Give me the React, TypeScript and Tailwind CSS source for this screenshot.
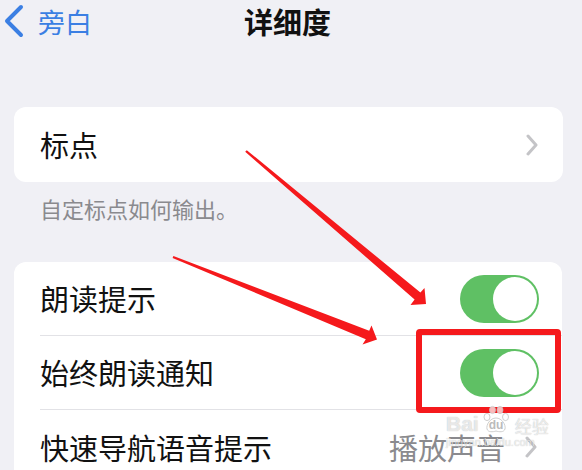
import { ReactNode } from 'react'

function Toggle() {
  return (
    <div className="relative h-[48px] w-[79px] rounded-full bg-[#5fc064]">
      <div className="absolute right-[2px] top-[2px] h-[44px] w-[44px] rounded-full bg-white" />
    </div>
  )
}

function Chevron() {
  return (
    <svg width="12" height="22" viewBox="0 0 12 22" fill="none">
      <path d="M2 2 L10 11 L2 20" stroke="#c4c4c7" strokeWidth="3" strokeLinecap="round" strokeLinejoin="round" />
    </svg>
  )
}

function Row({ label, children, last }: { label: string; children: ReactNode; last?: boolean }) {
  return (
    <div className="flex h-[74px] pl-[26px]">
      <div
        className={
          'flex flex-1 items-center justify-between pr-[23px] ' +
          (last ? '' : 'border-b border-[#e2e2e6]')
        }
      >
        <span className="text-[29px] leading-none">{label}</span>
        {children}
      </div>
    </div>
  )
}

export default function App() {
  return (
    <div className="relative h-[470px] w-[582px] overflow-hidden bg-[#f0f0f5] font-['Noto_Sans_CJK_SC',sans-serif] text-[#111]">
      {/* Nav bar */}
      <header className="grid h-[42px] grid-cols-[1fr_auto_1fr] items-center">
        <div className="flex items-center gap-[14px] pl-[3px] text-[#3b7fe3]">
          <svg width="21" height="34" viewBox="0 0 21 34" fill="none">
            <path d="M18 3 L4 17 L18 31" stroke="currentColor" strokeWidth="4" strokeLinecap="round" strokeLinejoin="round" />
          </svg>
          <span className="text-[27px] leading-none">旁白</span>
        </div>
        <h1 className="pr-[7px] text-[29px] font-bold leading-none">详细度</h1>
        <div />
      </header>

      {/* Punctuation */}
      <div className="mt-[65px] ml-[14px] mr-[19px] flex h-[75px] items-center justify-between rounded-[12px] bg-white pl-[26px] pr-[25px]">
        <span className="text-[29px] leading-none">标点</span>
        <Chevron />
      </div>
      <p className="mt-[11px] pl-[40px] text-[22px] leading-[30px] text-[#8a8a8e]">自定标点如何输出。</p>

      {/* Toggles */}
      <div className="mt-[39px] ml-[14px] mr-[20px] rounded-t-[12px] bg-white">
        <Row label="朗读提示">
          <Toggle />
        </Row>
        <Row label="始终朗读通知">
          <Toggle />
        </Row>
        <Row label="快速导航语音提示" last>
          <div className="flex items-center gap-[20px] pr-[2px]">
            <span className="text-[29px] leading-none text-[#8a8a8e]">播放声音</span>
            <Chevron />
          </div>
        </Row>
      </div>

      {/* Annotations */}
      <div className="absolute left-[416px] top-[329px] h-[84px] w-[145px] rounded-[4px] border-[6px] border-[#f5191c]" />
      <svg className="pointer-events-none absolute inset-0" width="582" height="470" viewBox="0 0 582 470">
        <path d="M245.2 151.8 L246.8 150.2 L420.4 292.6 L424.5 288 L426 304 L410.5 305 L414.6 299.4 Z" fill="#f5191c" />
        <path d="M172.6 258 L173.4 256 L369.2 330.8 L371.5 325.5 L377 339.5 L362.5 344.5 L365.8 339.2 Z" fill="#f5191c" />
      </svg>

      {/* Watermark */}
      <div className="pointer-events-none absolute left-[446px] top-[404px] flex flex-col font-['Liberation_Sans',sans-serif] text-white/70 [text-shadow:0_0_1px_rgba(0,0,0,0.3)]">
        <div className="flex items-end gap-[2px]">
          <span className="text-[21px] font-bold leading-none">Bai</span>
          <div className="relative h-[30px] w-[30px]">
            <svg width="30" height="30" viewBox="0 0 30 30" className="absolute inset-0">
              <g fill="white" fillOpacity="0.7" stroke="#c2c2c2" strokeWidth="0.8">
                <ellipse cx="6" cy="13" rx="3" ry="3.6" />
                <ellipse cx="11.5" cy="6" rx="3" ry="3.6" />
                <ellipse cx="19" cy="6" rx="3" ry="3.6" />
                <ellipse cx="24.5" cy="13" rx="3" ry="3.6" />
                <path d="M15 14 C21 14 25 21 24 25 C23 28.5 18 28 15 27 C12 28 7 28.5 6 25 C5 21 9 14 15 14 Z" />
              </g>
            </svg>
            <span className="absolute left-[8px] top-[15px] text-[12px] font-bold leading-none text-[#bbb] [text-shadow:none]">du</span>
          </div>
          <span className="ml-[2px] font-['Noto_Sans_CJK_SC',sans-serif] text-[17px] leading-none">经验</span>
        </div>
        <span className="mt-[3px] text-[11px] leading-none">jingyan.baidu.com</span>
      </div>
    </div>
  )
}
